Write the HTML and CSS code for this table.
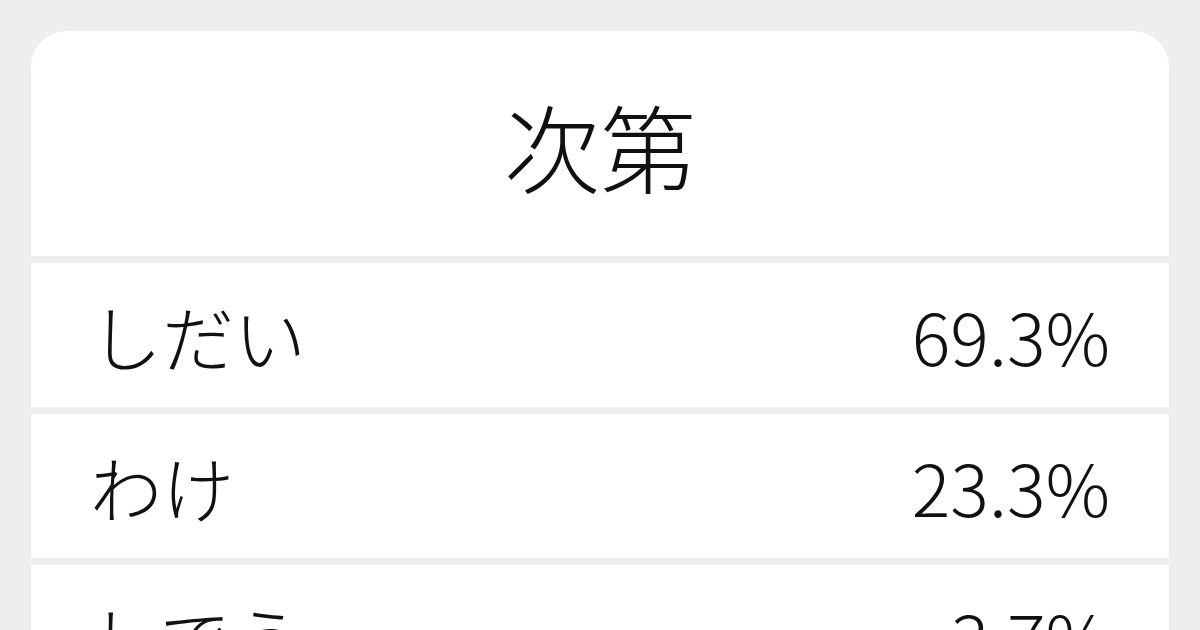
FILE: index.html
```html
<!DOCTYPE html>
<html lang="ja">
<head>
<meta charset="utf-8">
<link rel="stylesheet" href="styles.css">
</head>
<body>
<div class="page">
  <div class="card">
    <div class="head">次第</div>
    <div class="row"><span class="yomi">しだい</span><span class="pct">69.3%</span></div>
    <div class="row"><span class="yomi">わけ</span><span class="pct">23.3%</span></div>
    <div class="row"><span class="yomi">しでう</span><span class="pct">3.7%</span></div>
  </div>
</div>
</body>
</html>
```

FILE: styles.css
```css
html, body {
  margin: 0;
  padding: 0;
  background: #eeeeee;
  width: 1200px;
  height: 630px;
  overflow: hidden;
}
.page {
  padding: 31px 31px 0 31px;
  font-family: "Noto Sans CJK JP", "Noto Sans", sans-serif;
  font-weight: 300;
  color: #111111;
}
.card {
  display: flex;
  flex-direction: column;
  gap: 7px;
  border-radius: 36px 36px 0 0;
  overflow: hidden;
}
.head {
  background: #ffffff;
  height: 225px;
  padding-top: 2px;
  box-sizing: border-box;
  display: flex;
  align-items: center;
  justify-content: center;
  font-size: 96px;
  line-height: 1;
}
.row {
  background: #ffffff;
  height: 144px;
  flex: 0 0 144px;
  display: flex;
  align-items: center;
  justify-content: space-between;
  padding: 0 59px 0 59px;
  font-size: 72px;
  line-height: 1;
}
```
